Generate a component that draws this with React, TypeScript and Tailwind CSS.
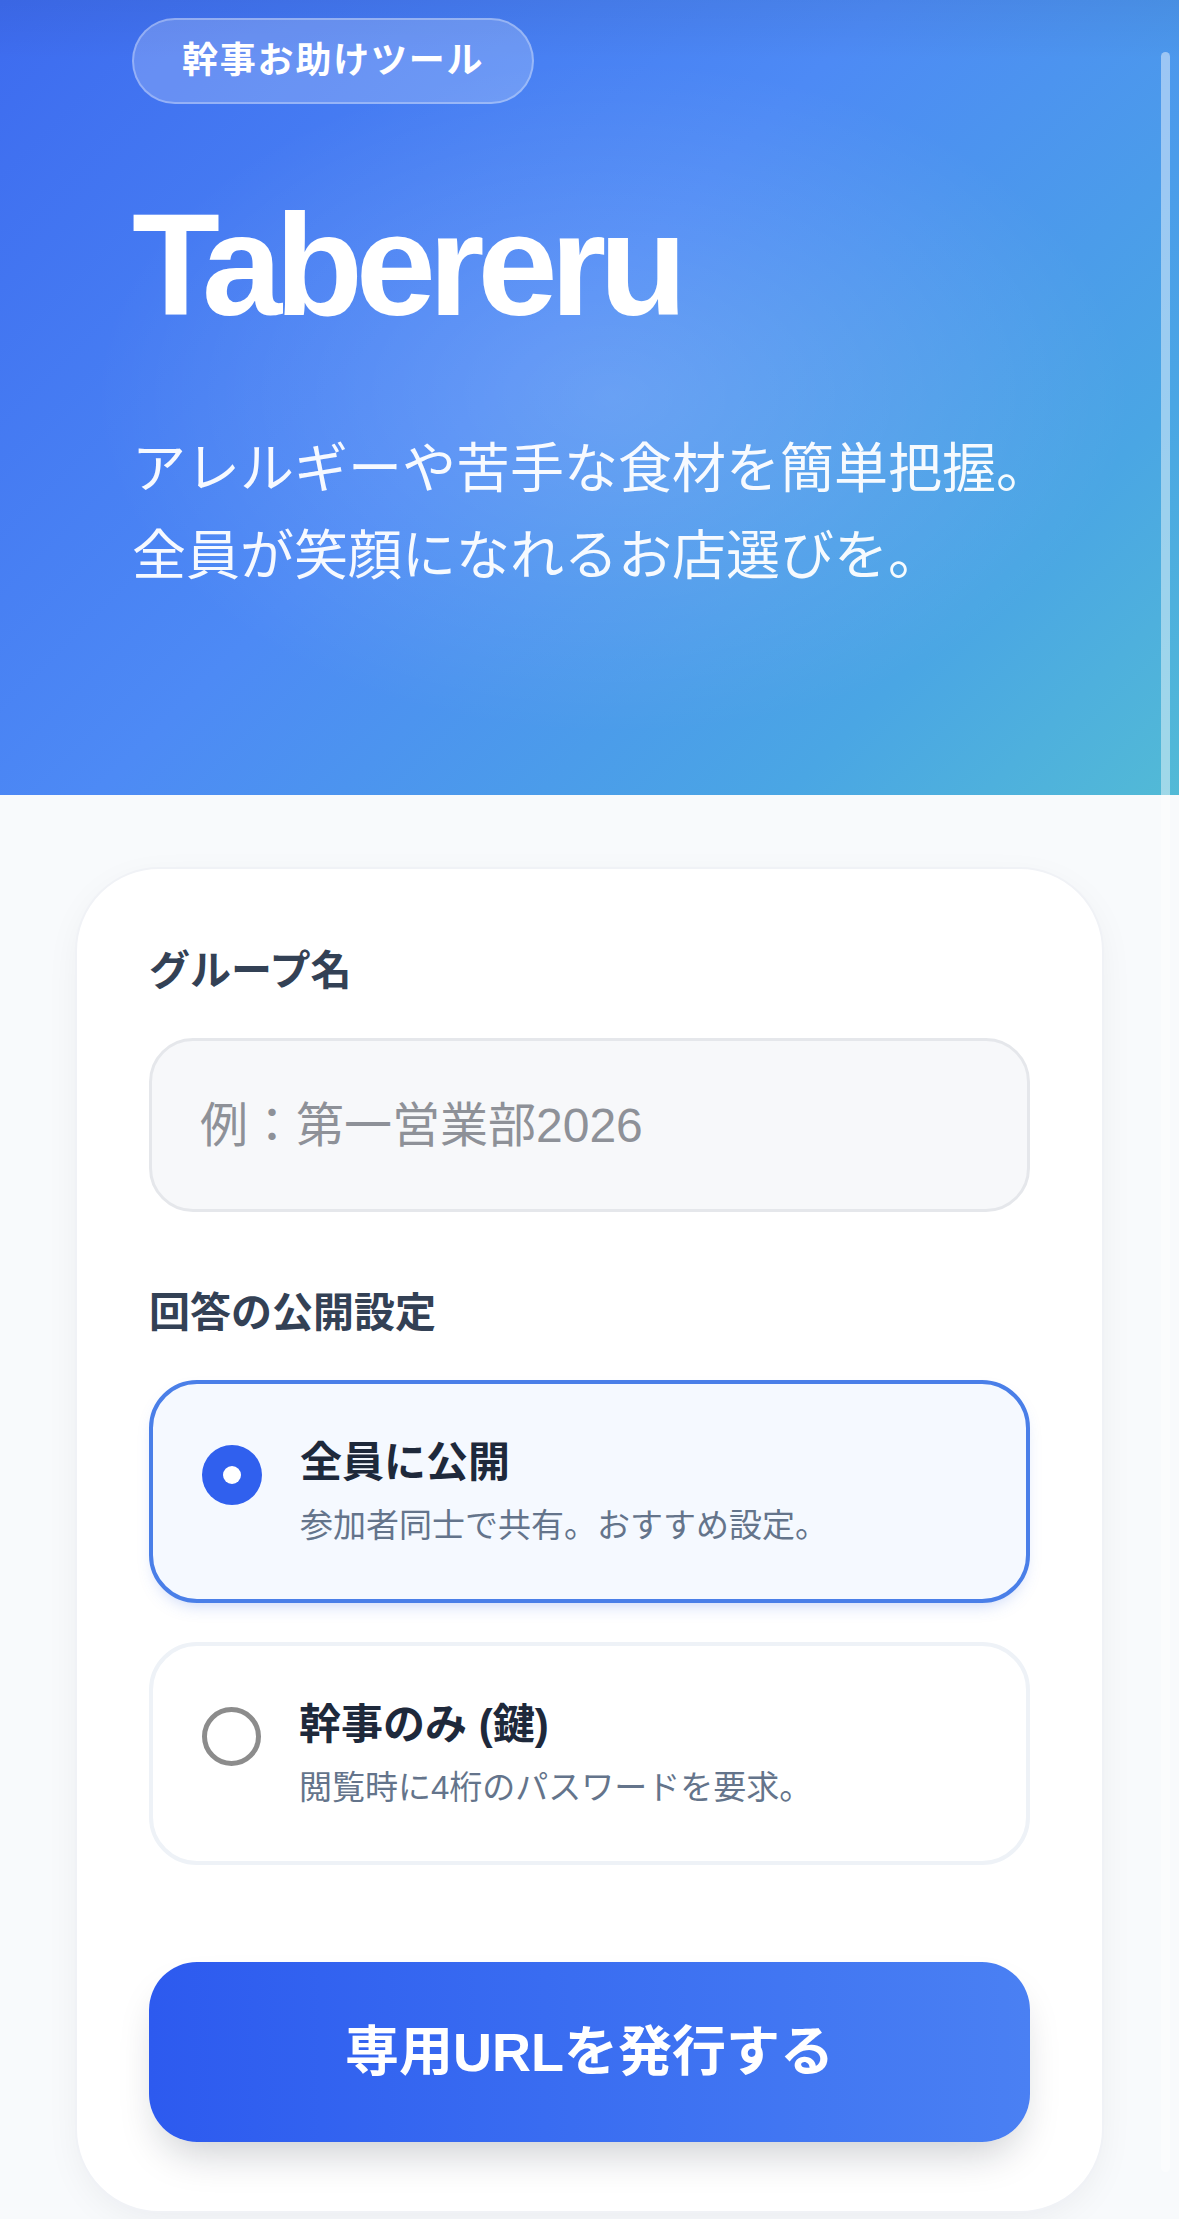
import { useState } from "react"

const options = [
  { id: "all", title: "全員に公開", desc: "参加者同士で共有。おすすめ設定。" },
  { id: "lock", title: "幹事のみ (鍵)", desc: "閲覧時に4桁のパスワードを要求。" },
]

export default function App() {
  const [visibility, setVisibility] = useState("all")
  const [groupName, setGroupName] = useState("")

  return (
    <div className="relative h-[2219px] overflow-hidden bg-[#f8fafc] font-['Liberation_Sans','Noto_Sans_CJK_JP',sans-serif]">
      {/* hero */}
      <header className="relative h-[795px] overflow-hidden bg-[linear-gradient(135deg,#3d6bef_0%,#4d8af5_45%,#4aa6e4_80%,#52bad6_100%)] pl-[132px] pt-[18px]">
        <div className="pointer-events-none absolute inset-0 bg-[radial-gradient(ellipse_at_52%_50%,rgba(255,255,255,0.16),rgba(255,255,255,0)_60%)]" />
        <div className="pointer-events-none absolute inset-x-0 top-0 h-[60px] bg-gradient-to-b from-black/5 to-transparent" />
        <div className="relative">
          <span className="inline-flex h-[86px] items-center rounded-full border-2 border-white/30 bg-white/20 px-[48px] text-[36px] font-bold tracking-[0.05em] text-white">
            幹事お助けツール
          </span>
          <h1 className="mt-[90px] text-[144px] font-bold leading-none tracking-tighter text-white">
            Tabereru
          </h1>
          <p className="mt-[88px] text-[54px] leading-[87px] text-white/95">
            アレルギーや苦手な食材を簡単把握。
            <br />
            全員が笑顔になれるお店選びを。
          </p>
        </div>
      </header>

      {/* form card */}
      <main className="px-[75px] pt-[72px]">
        <div className="rounded-[84px] border-2 border-[#f0f2f6] bg-white px-[72px] pb-[69px] pt-[72px] shadow-[0_10px_40px_-10px_rgba(15,23,42,0.08)]">
          <label className="block text-[41px] font-bold leading-[60px] text-[#334155]">
            グループ名
          </label>
          <input
            value={groupName}
            onChange={(e) => setGroupName(e.target.value)}
            placeholder="例：第一営業部2026"
            className="mt-[37px] block h-[174px] w-full rounded-[44px] border-[3px] border-[#e5e7eb] bg-[#f7f8fa] px-[48px] text-[48px] text-[#1e293b] outline-none placeholder:text-[#8e9198]"
          />

          <p className="mt-[71px] text-[41px] font-bold leading-[60px] text-[#334155]">
            回答の公開設定
          </p>

          <div className="mt-[37px] flex flex-col gap-[39px]">
            {options.map((opt) => {
              const active = visibility === opt.id
              return (
                <button
                  key={opt.id}
                  type="button"
                  onClick={() => setVisibility(opt.id)}
                  className={
                    active
                      ? "flex h-[223px] items-start gap-[38px] rounded-[48px] border-4 border-[#4a7fe8] bg-[#f5f9ff] pl-[49px] pt-[49px] text-left shadow-[0_8px_18px_-8px_rgba(59,110,230,0.35)]"
                      : "flex h-[223px] items-start gap-[38px] rounded-[48px] border-4 border-[#eef2f7] bg-white pl-[49px] pt-[49px] text-left"
                  }
                >
                  {active ? (
                    <span className="mt-[12px] flex h-[60px] w-[60px] shrink-0 items-center justify-center rounded-full bg-[#3060ee]">
                      <span className="h-[18px] w-[18px] rounded-full bg-white" />
                    </span>
                  ) : (
                    <span className="mt-[12px] h-[59px] w-[59px] shrink-0 rounded-full border-[5px] border-[#8c8c8c]" />
                  )}
                  <span className="flex flex-col">
                    <span className="text-[42px] font-bold leading-[60px] text-[#1e293b]">{opt.title}</span>
                    <span className="mt-[9px] text-[33px] leading-[48px] text-[#64748b]">{opt.desc}</span>
                  </span>
                </button>
              )
            })}
          </div>

          <button
            type="button"
            className="mt-[97px] flex h-[180px] w-full items-center justify-center rounded-[48px] bg-gradient-to-r from-[#2d5aef] to-[#4a80f3] text-[54px] font-bold text-white shadow-[0_22px_40px_-12px_rgba(15,23,42,0.22)]"
          >
            専用URLを発行する
          </button>
        </div>
      </main>

      {/* scroll indicator */}
      <div className="pointer-events-none absolute right-[9px] top-[52px] h-[2120px] w-[9px] rounded-full bg-white/45" />
    </div>
  )
}
